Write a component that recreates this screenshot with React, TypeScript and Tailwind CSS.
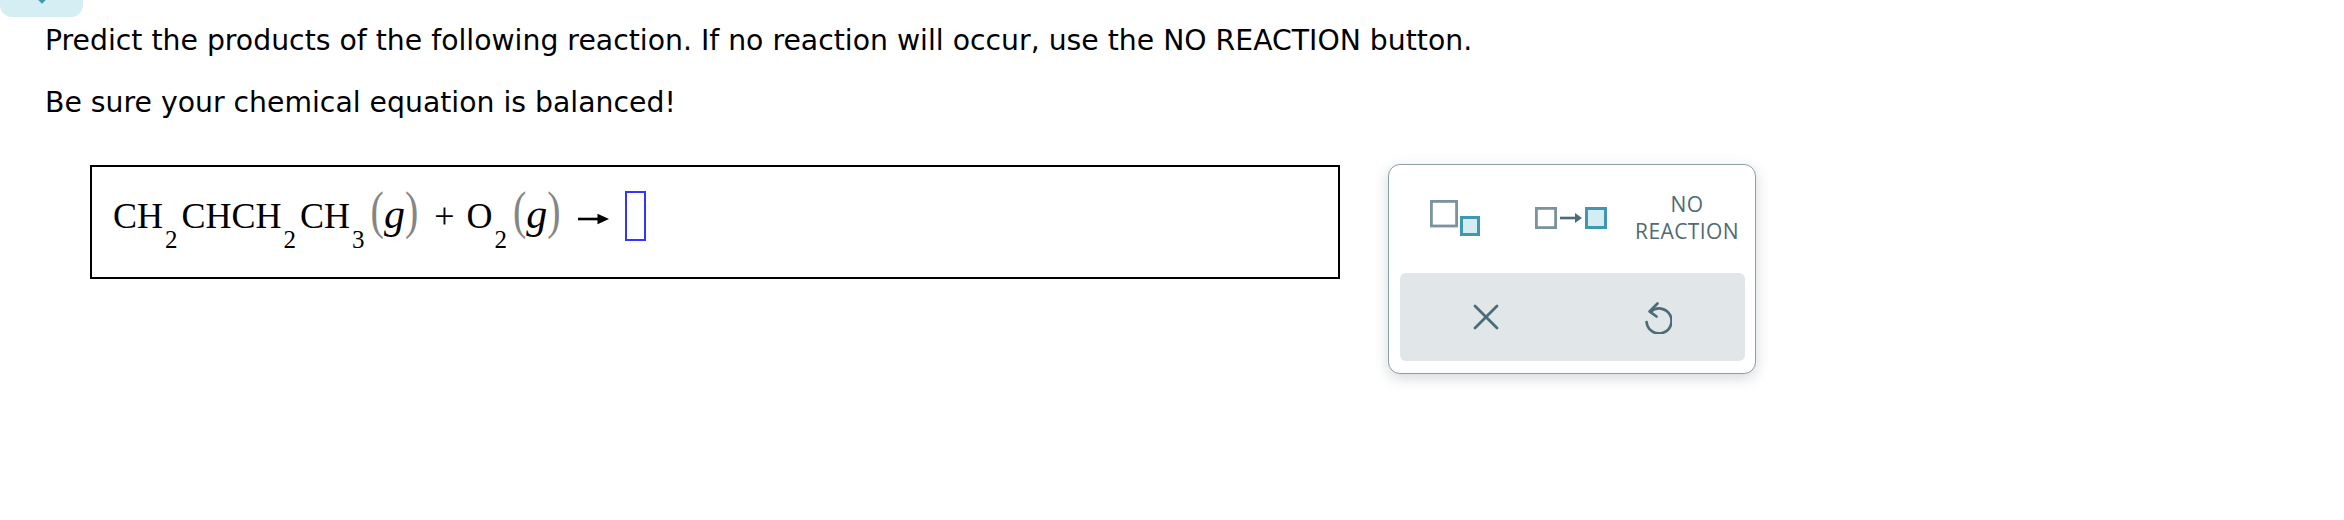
import React from "react";

const serif = "font-['Liberation_Serif','Times_New_Roman',serif]";

// small subscript used in the formula
function Sub({ children }: { children: React.ReactNode }) {
  return (
    <span className={`inline-block pl-[2px] pr-[4px] align-[-20px] ${serif} text-[25px] leading-none`}>
      {children}
    </span>
  );
}

// gray stretched parentheses around the phase
function Phase({ label }: { label: string }) {
  return (
    <span className={`ml-[2px] inline-block ${serif} text-[40px]`}>
      <span className="inline-block -translate-y-[3.5px] scale-y-[1.3] text-[#858585]">(</span>
      <span className="inline-block text-[42px] italic">{label}</span>
      <span className="inline-block -translate-y-[3.5px] scale-y-[1.3] text-[#858585]">)</span>
    </span>
  );
}

function ReactionArrow() {
  return (
    <svg width="31" height="12" viewBox="0 0 31 12" className="ml-[17px] inline-block align-[3px]">
      <path d="M0 6 H22" stroke="#000" strokeWidth="2.6" />
      <path d="M19.5 0.8 L31 6 L19.5 11.2 Z" fill="#000" />
    </svg>
  );
}

function SubscriptIcon() {
  return (
    <svg width="50" height="36" viewBox="0 0 50 36">
      <rect x="1.4" y="1.4" width="25.2" height="24.6" fill="none" stroke="#7b939c" strokeWidth="2.8" />
      <rect x="31.5" y="17.5" width="17" height="17" fill="#d4edf3" stroke="#3f97b0" strokeWidth="3" />
    </svg>
  );
}

function ArrowIcon() {
  return (
    <svg width="74" height="22" viewBox="0 0 74 22">
      <rect x="1.4" y="1.4" width="19.2" height="19.2" fill="none" stroke="#7b939c" strokeWidth="2.8" />
      <path d="M25 11 H42" stroke="#4b6b78" strokeWidth="2.6" />
      <path d="M40 6 L47 11 L40 16 Z" fill="#4b6b78" />
      <rect x="51.5" y="1.5" width="19" height="19" fill="#d4edf3" stroke="#3f97b0" strokeWidth="3" />
    </svg>
  );
}

function CloseIcon() {
  return (
    <svg width="26" height="26" viewBox="0 0 26 26" fill="none" stroke="#4b6b78" strokeWidth="2.8" strokeLinecap="round">
      <path d="M2 2 L24 24" />
      <path d="M24 2 L2 24" />
    </svg>
  );
}

function UndoIcon() {
  return (
    <svg
      width="27"
      height="33"
      viewBox="0 0 27 33"
      fill="none"
      stroke="#4b6b78"
      strokeWidth="2.7"
      strokeLinecap="round"
      strokeLinejoin="round"
    >
      <path d="M5.6 10.7 A12.5 12.5 0 1 1 1.6 21.1" />
      <path d="M12.5 2.5 L4.5 10.4 L11.5 15.5" />
    </svg>
  );
}

export default function App() {
  return (
    <div className="min-h-[520px] w-[2344px] bg-white text-black">
      {/* collapsed header tab */}
      <div className="relative h-[17px] w-[83px] overflow-hidden rounded-b-[12px] bg-[#d5eef4]">
        <svg width="16" height="16" viewBox="0 0 16 16" className="absolute left-[34px] top-[-8px]">
          <path d="M3 5 L8 10 L13 5" fill="none" stroke="#3f98b0" strokeWidth="2.5" strokeLinecap="round" />
        </svg>
      </div>

      <p className="mt-[7.6px] pl-[45px] font-['DejaVu_Sans',Verdana,sans-serif] text-[28.3px] leading-[32px]">
        Predict the products of the following reaction. If no reaction will occur, use the NO REACTION button.
      </p>
      <p className="mt-[30px] pl-[45px] font-['DejaVu_Sans',Verdana,sans-serif] text-[28.3px] leading-[32px]">
        Be sure your chemical equation is balanced!
      </p>

      <div className="mt-[45.4px] flex items-start gap-[48px] pl-[90px]">
        {/* equation answer box */}
        <div
          className={`mt-px h-[114px] w-[1250px] shrink-0 whitespace-nowrap border-2 border-black pl-[21px] pt-[24px] ${serif} text-[36px] leading-[40px]`}
        >
          <span>CH</span>
          <Sub>2</Sub>
          <span>CHCH</span>
          <Sub>2</Sub>
          <span>CH</span>
          <Sub>3</Sub>
          <Phase label="g" />
          <span className="ml-[16px] mr-[12px] inline-block">+</span>
          <span>O</span>
          <Sub>2</Sub>
          <Phase label="g" />
          <ReactionArrow />
          <span className="ml-[16px] inline-block h-[50px] w-[21px] border-2 border-[#3535ff] align-[-13px]" />
        </div>

        {/* palette */}
        <div className="flex h-[210px] w-[368px] shrink-0 flex-col rounded-[12px] border-[1.5px] border-[#8d9fa7] bg-white px-[10.5px] pb-[10.5px] shadow-[0_4px_14px_rgba(40,60,70,0.2)]">
          <div className="grid h-[106px] grid-cols-3 items-center">
            <div className="flex justify-center pr-[4px]">
              <SubscriptIcon />
            </div>
            <div className="flex justify-center">
              <ArrowIcon />
            </div>
            <div className="text-center font-['Open_Sans',sans-serif] text-[21px] leading-[27px] tracking-[0.4px] text-[#4f6b75]">
              NO
              <br />
              REACTION
            </div>
          </div>
          <div className="mt-[2.5px] grid h-[88px] grid-cols-2 items-center rounded-[6px] bg-[#e1e6e9]">
            <div className="flex justify-center">
              <CloseIcon />
            </div>
            <div className="flex justify-center">
              <UndoIcon />
            </div>
          </div>
        </div>
      </div>
    </div>
  );
}
